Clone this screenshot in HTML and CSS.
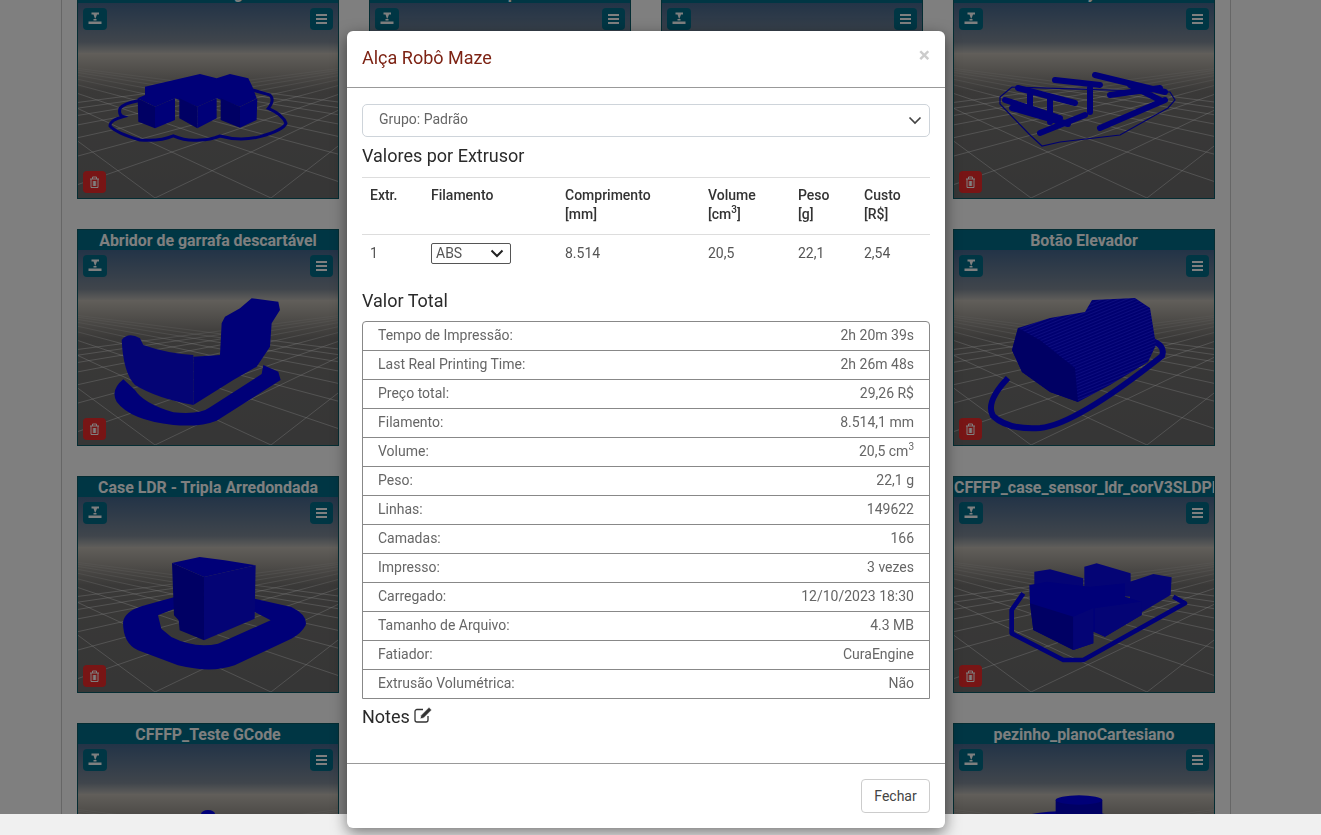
FILE: index.html
```html
<!DOCTYPE html>
<html lang="pt-BR">
<head>
  <meta charset="UTF-8" />
  <title>Impressões</title>
  <link rel="stylesheet" href="styles.css">
</head>
<body>
  <!-- shared drawings -->
  <svg class="sprite" aria-hidden="true">
    <defs>
      <linearGradient id="sky" x1="0" y1="0" x2="0" y2="1">
        <stop offset="0" stop-color="#46688f"/>
        <stop offset=".2" stop-color="#808b98"/>
        <stop offset=".27" stop-color="#cbc5bb"/>
        <stop offset=".45" stop-color="#747270"/>
        <stop offset="1" stop-color="#6c6c6c"/>
      </linearGradient>
      <linearGradient id="fade" x1="0" y1="0" x2="0" y2="1">
        <stop offset="0" stop-color="#c4beb5" stop-opacity="1"/>
        <stop offset=".7" stop-color="#807d79" stop-opacity=".5"/>
        <stop offset="1" stop-color="#747270" stop-opacity="0"/>
      </linearGradient>
      <pattern id="layers" width="4" height="3" patternUnits="userSpaceOnUse" patternTransform="rotate(-22)">
        <rect width="4" height="3" fill="#0000e0"/>
        <rect width="4" height="1" fill="#1a1aff"/>
      </pattern>
      <symbol id="ground" viewBox="0 0 260 195">
        <rect width="260" height="195" fill="url(#sky)"/>
        <path class="grid-line" d="M-120 50L77 195M-120 50L193 195M-120 50L309 195M-120 50L425 195M-120 50L541 195M-120 50L657 195M-120 50L773 195M-120 50L889 195M-120 50L1005 195"/>
        <path class="grid-line" d="M380 50L193 195M380 50L77 195M380 50L-39 195M380 50L-155 195M380 50L-271 195M380 50L-387 195M380 50L-503 195M380 50L-619 195M380 50L-735 195"/>
        <rect y="50" width="260" height="44" fill="url(#fade)"/>
      </symbol>
      <symbol id="i-nozzle" viewBox="0 0 24 22">
        <path d="M8.500 4.500h7.500v2h-2l-1.500 4h-.6L10.500 6.500h-2z"/>
        <rect x="10.500" y="11" width="3" height="1.500"/>
        <rect x="5.500" y="13.500" width="13" height="2.500"/>
      </symbol>
      <symbol id="i-bars" viewBox="0 0 23 22">
        <path d="M6 6h11v2H6zM6 10h11v2H6zM6 14h11v2H6z"/>
      </symbol>
      <symbol id="i-trash" viewBox="0 0 23 22">
        <path class="trash-line" d="M7 8h9M8 8v8.500h7V8M9.500 8V6h4v2M10.300 10v5M11.500 10v5M12.700 10v5"/>
      </symbol>
    </defs>
  </svg>

  <div class="container">
    <div class="grid">

      <div class="card">
        <div class="card-title">Caixa de Engate</div>
        <div class="scene">
          <svg class="scene-art" viewBox="0 0 260 195">
            <use href="#ground"/>
            <g transform="translate(-18,-3) scale(.3333)">
              <path class="thin" d="M235 302Q190 310 180 325Q175 345 190 350Q150 360 150 378Q170 400 240 420Q300 425 340 408Q380 425 420 420Q450 420 480 408Q540 425 600 410Q670 390 678 370Q670 345 625 325Q645 300 630 285L578 270"/>
              <path class="solid" d="M255 260L420 222L470 235L510 222L565 235L578 262L590 295L540 320L470 295L412 320L345 295L285 320L233 295L255 285Z"/>
              <path class="dark" d="M233 295L285 320L285 385L235 365ZM358 295L412 320L412 385L358 355ZM482 295L540 320L540 383L482 360Z"/>
              <path class="solid" d="M285 320L345 295L345 360L285 385ZM412 320L470 295L470 355L412 385ZM540 320L592 295L590 360L540 383Z"/>
            </g>
          </svg>
          <button class="btn-icon btn-nozzle"><svg><use href="#i-nozzle"/></svg></button>
          <button class="btn-icon btn-menu"><svg><use href="#i-bars"/></svg></button>
          <button class="btn-icon btn-trash"><svg><use href="#i-trash"/></svg></button>
        </div>
      </div>

      <div class="card">
        <div class="card-title">Base Superior</div>
        <div class="scene">
          <svg class="scene-art" viewBox="0 0 260 195"><use href="#ground"/></svg>
          <button class="btn-icon btn-nozzle"><svg><use href="#i-nozzle"/></svg></button>
          <button class="btn-icon btn-menu"><svg><use href="#i-bars"/></svg></button>
          <button class="btn-icon btn-trash"><svg><use href="#i-trash"/></svg></button>
        </div>
      </div>

      <div class="card">
        <div class="card-title">Caixa Sensor</div>
        <div class="scene">
          <svg class="scene-art" viewBox="0 0 260 195"><use href="#ground"/></svg>
          <button class="btn-icon btn-nozzle"><svg><use href="#i-nozzle"/></svg></button>
          <button class="btn-icon btn-menu"><svg><use href="#i-bars"/></svg></button>
          <button class="btn-icon btn-trash"><svg><use href="#i-trash"/></svg></button>
        </div>
      </div>

      <div class="card">
        <div class="card-title">Rodas y Eixo</div>
        <div class="scene">
          <svg class="scene-art" viewBox="0 0 260 195">
            <use href="#ground"/>
            <g transform="translate(-954,-3)">
              <path class="hair" d="M1000 97L1012 87L1170 92L1175 100L1168 108L1120 135L1060 142L1042 146L1030 135L1000 104Z"/>
              <path class="rod" d="M1018 88L1075 103M1005 100L1060 118M1012 108L1068 124M1040 133L1085 115M1055 80L1100 85M1095 75L1165 92M1110 95L1160 88M1100 128L1165 100M1130 85L1160 100M1030 92L1030 112M1050 98L1050 122M1090 88L1090 112"/>
            </g>
          </svg>
          <button class="btn-icon btn-nozzle"><svg><use href="#i-nozzle"/></svg></button>
          <button class="btn-icon btn-menu"><svg><use href="#i-bars"/></svg></button>
          <button class="btn-icon btn-trash"><svg><use href="#i-trash"/></svg></button>
        </div>
      </div>

      <div class="card">
        <div class="card-title">Abridor de garrafa descartável</div>
        <div class="scene">
          <svg class="scene-art" viewBox="0 0 260 195">
            <use href="#ground"/>
            <g transform="translate(-18,0) scale(.3333)">
              <path class="solid" d="M610 345L655 365L662 390L470 512Q420 532 340 525Q210 510 170 455Q150 420 190 388L225 420Q250 460 340 487Q420 495 450 472L605 372Z"/>
              <path class="solid" d="M400 320L480 315L485 220L495 200L540 175L575 145L655 155L660 180L635 220L630 290L590 350L520 390L400 465Z"/>
              <path class="fill-layers" d="M185 270Q205 245 240 265L250 285Q320 310 400 315L400 465Q290 445 225 405Q190 370 185 270Z"/>
            </g>
          </svg>
          <button class="btn-icon btn-nozzle"><svg><use href="#i-nozzle"/></svg></button>
          <button class="btn-icon btn-menu"><svg><use href="#i-bars"/></svg></button>
          <button class="btn-icon btn-trash"><svg><use href="#i-trash"/></svg></button>
        </div>
      </div>

      <div class="card">
        <div class="card-title">Suporte</div>
        <div class="scene">
          <svg class="scene-art" viewBox="0 0 260 195"><use href="#ground"/></svg>
        </div>
      </div>

      <div class="card">
        <div class="card-title">Tampa</div>
        <div class="scene">
          <svg class="scene-art" viewBox="0 0 260 195"><use href="#ground"/></svg>
        </div>
      </div>

      <div class="card">
        <div class="card-title">Botão Elevador</div>
        <div class="scene">
          <svg class="scene-art" viewBox="0 0 260 195">
            <use href="#ground"/>
            <g transform="translate(-954,-250)">
              <path class="ring" d="M1008 378Q985 402 993 416Q1008 430 1040 428Q1075 425 1162 356Q1166 345 1150 340"/>
              <path class="fill-layers" d="M1018 328L1050 318L1085 312L1092 300L1135 298L1150 308L1156 345L1148 362L1110 385L1078 402L1050 392L1022 372L1012 350Z"/>
              <path class="dark" d="M1022 372L1050 392L1078 402L1075 368L1040 340L1018 328L1012 350Z"/>
            </g>
          </svg>
          <button class="btn-icon btn-nozzle"><svg><use href="#i-nozzle"/></svg></button>
          <button class="btn-icon btn-menu"><svg><use href="#i-bars"/></svg></button>
          <button class="btn-icon btn-trash"><svg><use href="#i-trash"/></svg></button>
        </div>
      </div>

      <div class="card">
        <div class="card-title">Case LDR - Tripla Arredondada</div>
        <div class="scene">
          <svg class="scene-art" viewBox="0 0 260 195">
            <use href="#ground"/>
            <g transform="scale(.3333)">
              <path class="solid" fill-rule="evenodd" d="M135 375Q140 345 190 328L290 300L530 305L640 330Q690 355 683 385Q670 410 640 425L470 505Q400 530 300 505L180 460Q135 440 135 375ZM240 355L250 395L280 420Q350 455 420 440L578 370L530 345L290 335Z"/>
              <path class="dark" d="M282 198L378 240L378 430L305 400L302 370L288 355Z"/>
              <path class="fill-layers" d="M378 240L533 205L530 365L378 430Z"/>
              <path class="solid" d="M282 198L365 180L440 190L533 205L378 240Z"/>
            </g>
          </svg>
          <button class="btn-icon btn-nozzle"><svg><use href="#i-nozzle"/></svg></button>
          <button class="btn-icon btn-menu"><svg><use href="#i-bars"/></svg></button>
          <button class="btn-icon btn-trash"><svg><use href="#i-trash"/></svg></button>
        </div>
      </div>

      <div class="card">
        <div class="card-title">Suporte</div>
        <div class="scene">
          <svg class="scene-art" viewBox="0 0 260 195"><use href="#ground"/></svg>
        </div>
      </div>

      <div class="card">
        <div class="card-title">Tampa</div>
        <div class="scene">
          <svg class="scene-art" viewBox="0 0 260 195"><use href="#ground"/></svg>
        </div>
      </div>

      <div class="card">
        <div class="card-title">CFFFP_case_sensor_ldr_corV3SLDPRT</div>
        <div class="scene">
          <svg class="scene-art" viewBox="0 0 260 195">
            <use href="#ground"/>
            <g transform="translate(-14,-27) scale(.3333)">
              <path class="ring-thin" d="M250 370L215 420L215 490L370 570L430 570L735 400L700 380"/>
              <path class="fill-layers" d="M283 305L330 298L430 325L430 380L283 360Z"/>
              <path class="fill-layers" d="M433 290L470 280L572 310L572 380L433 370Z"/>
              <path class="fill-layers" d="M570 335L640 312L695 322L692 375L600 430L570 420Z"/>
              <path class="solid" d="M268 345L320 335L450 350L555 340L555 380L605 395L605 435L495 500L460 485L460 520L400 540L280 480L270 400Z"/>
              <path class="dark" d="M270 400L400 440L400 540L280 480Z"/>
              <path class="fill-layers" d="M400 440L460 415L460 520L400 540ZM465 415L605 395L605 435L495 500L465 485Z"/>
            </g>
          </svg>
          <button class="btn-icon btn-nozzle"><svg><use href="#i-nozzle"/></svg></button>
          <button class="btn-icon btn-menu"><svg><use href="#i-bars"/></svg></button>
          <button class="btn-icon btn-trash"><svg><use href="#i-trash"/></svg></button>
        </div>
      </div>

      <div class="card">
        <div class="card-title">CFFFP_Teste GCode</div>
        <div class="scene">
          <svg class="scene-art" viewBox="0 0 260 195">
            <use href="#ground"/>
            <ellipse class="solid" cx="130" cy="70" rx="7" ry="4"/>
          </svg>
          <button class="btn-icon btn-nozzle"><svg><use href="#i-nozzle"/></svg></button>
          <button class="btn-icon btn-menu"><svg><use href="#i-bars"/></svg></button>
        </div>
      </div>

      <div class="card">
        <div class="card-title">Suporte</div>
        <div class="scene"><svg class="scene-art" viewBox="0 0 260 195"><use href="#ground"/></svg></div>
      </div>

      <div class="card">
        <div class="card-title">Tampa</div>
        <div class="scene"><svg class="scene-art" viewBox="0 0 260 195"><use href="#ground"/></svg></div>
      </div>

      <div class="card">
        <div class="card-title">pezinho_planoCartesiano</div>
        <div class="scene">
          <svg class="scene-art" viewBox="0 0 260 195">
            <use href="#ground"/>
            <g transform="translate(-14,-54) scale(.3333)">
              <ellipse class="solid" cx="385" cy="395" rx="155" ry="32"/>
              <path class="dark" d="M347 330L487 330L487 400L347 400Z"/>
              <ellipse class="solid" cx="417" cy="330" rx="70" ry="14"/>
            </g>
          </svg>
          <button class="btn-icon btn-nozzle"><svg><use href="#i-nozzle"/></svg></button>
          <button class="btn-icon btn-menu"><svg><use href="#i-bars"/></svg></button>
        </div>
      </div>

    </div>
  </div>

  <div class="backdrop"></div>
  <div class="page-footer"></div>

  <div class="modal">
    <div class="modal-header">
      <h4 class="modal-title">Alça Robô Maze</h4>
      <button class="modal-close">×</button>
    </div>

    <div class="modal-body">
      <div class="select-wrap">
        <select class="group-select">
          <option>Grupo: Padrão</option>
        </select>
        <svg class="chevron" viewBox="0 0 14 9"><path d="M1.500 1.500L7 7l5.500-5.500"/></svg>
      </div>

      <h5 class="section-title">Valores por Extrusor</h5>
      <table class="extruder-table">
        <colgroup>
          <col class="col-extr"><col class="col-fil"><col class="col-comp"><col class="col-vol"><col class="col-peso"><col class="col-custo">
        </colgroup>
        <thead>
          <tr>
            <th>Extr.</th>
            <th>Filamento</th>
            <th>Comprimento<br>[mm]</th>
            <th>Volume<br>[cm<sup>3</sup>]</th>
            <th>Peso<br>[g]</th>
            <th>Custo<br>[R$]</th>
          </tr>
        </thead>
        <tbody>
          <tr>
            <td>1</td>
            <td>
              <div class="mini-select">
                <select><option>ABS</option></select>
                <svg class="chevron-small" viewBox="0 0 14 9"><path d="M1.500 1.500L7 7l5.500-5.500"/></svg>
              </div>
            </td>
            <td>8.514</td>
            <td>20,5</td>
            <td>22,1</td>
            <td>2,54</td>
          </tr>
        </tbody>
      </table>

      <h5 class="section-title total-title">Valor Total</h5>
      <ul class="total-list">
        <li><span>Tempo de Impressão:</span><span>2h 20m 39s</span></li>
        <li><span>Last Real Printing Time:</span><span>2h 26m 48s</span></li>
        <li><span>Preço total:</span><span>29,26 R$</span></li>
        <li><span>Filamento:</span><span>8.514,1 mm</span></li>
        <li><span>Volume:</span><span>20,5 cm<sup>3</sup></span></li>
        <li><span>Peso:</span><span>22,1 g</span></li>
        <li><span>Linhas:</span><span>149622</span></li>
        <li><span>Camadas:</span><span>166</span></li>
        <li><span>Impresso:</span><span>3 vezes</span></li>
        <li><span>Carregado:</span><span>12/10/2023 18:30</span></li>
        <li><span>Tamanho de Arquivo:</span><span>4.3 MB</span></li>
        <li><span>Fatiador:</span><span>CuraEngine</span></li>
        <li><span>Extrusão Volumétrica:</span><span>Não</span></li>
      </ul>

      <h5 class="section-title notes-title">Notes
        <svg class="edit-icon" viewBox="0 0 18 16">
          <path class="edit-box" d="M9 2.500H3A2 2 0 0 0 1 4.500v8.500a2 2 0 0 0 2 2h9a2 2 0 0 0 2-2V9"/>
          <path class="edit-pen" d="M15 .3l2.700 2.700-8 8-3.700 1 1-3.700z"/>
        </svg>
      </h5>
    </div>

    <div class="modal-footer">
      <button class="btn-close-modal">Fechar</button>
    </div>
  </div>
</body>
</html>
```

FILE: styles.css
```css
html,
body {
  margin: 0;
  height: 100%;
  overflow: hidden;
}

body {
  font-family: Roboto, "Liberation Sans", sans-serif;
  font-size: 14px;
  color: #333;
  background-color: #fff;
}

.sprite {
  position: absolute;
  width: 0;
  height: 0;
}

.container {
  box-sizing: border-box;
  width: 1170px;
  margin-left: 61px;
  padding: 0 15px;
  border-left: 1px solid #ccc;
  border-right: 1px solid #ccc;
  height: 100%;
  overflow: hidden;
}

.grid {
  display: grid;
  grid-template-columns: repeat(4, 262px);
  gap: 30px;
  margin-top: -18px;
}

.card {
  height: 217px;
  box-sizing: border-box;
  border: 1px solid #0a5a66;
  background-color: #006d88;
}

.card-title {
  height: 20px;
  line-height: 21px;
  font-size: 15.9px;
  font-weight: 700;
  color: #fff;
  text-align: center;
  white-space: nowrap;
  overflow: hidden;
}

.scene {
  position: relative;
  height: 195px;
}

.scene-art {
  display: block;
  width: 260px;
  height: 195px;
}

.grid-line {
  fill: none;
  stroke: #fff;
  stroke-width: .7;
  stroke-opacity: .55;
}

.solid { fill: #0000f0; }
.dark { fill: #0000c8; }
.fill-layers { fill: url(#layers); }

.thin {
  fill: none;
  stroke: #0000e0;
  stroke-width: 9;
}

.hair {
  fill: none;
  stroke: #0000e0;
  stroke-width: 1.2;
}

.rod {
  fill: none;
  stroke: #0000f0;
  stroke-width: 6;
  stroke-linecap: round;
}

.ring {
  fill: none;
  stroke: #0000f0;
  stroke-width: 6;
}

.ring-thin {
  fill: none;
  stroke: #0000f0;
  stroke-width: 14;
  stroke-linejoin: round;
}

.btn-icon {
  position: absolute;
  padding: 0;
  border: 0;
  border-radius: 4px;
  height: 22px;
  background-color: #006d88;
}

.btn-icon svg {
  display: block;
  width: 100%;
  height: 100%;
  fill: #fff;
}

.btn-nozzle {
  left: 5px;
  top: 5px;
  width: 24px;
}

.btn-menu {
  right: 5px;
  top: 5px;
  width: 23px;
}

.btn-trash {
  left: 5px;
  bottom: 5px;
  width: 23px;
  background-color: #f02a2a;
}

.trash-line {
  fill: none;
  stroke: #fff;
  stroke-width: 1;
}

.backdrop {
  position: fixed;
  inset: 0;
  background-color: rgba(0, 0, 0, .5);
}

.page-footer {
  position: fixed;
  left: 0;
  right: 0;
  bottom: 0;
  height: 21px;
  background-color: #f0f0f0;
}

.modal {
  position: fixed;
  left: 347px;
  top: 31px;
  width: 598px;
  height: 797px;
  display: flex;
  flex-direction: column;
  box-sizing: border-box;
  background-color: #fff;
  border-radius: 6px;
  box-shadow: 0 5px 15px rgba(0, 0, 0, .5);
}

.modal-header {
  display: flex;
  justify-content: space-between;
  height: 57px;
  box-sizing: border-box;
  padding: 0 15px;
  border-bottom: 1px solid #999;
}

.modal-title {
  margin: 0;
  line-height: 54px;
  font-size: 18px;
  font-weight: 400;
  color: #7d2314;
}

.modal-close {
  height: 48px;
  padding: 0;
  border: 0;
  background: none;
  font-family: inherit;
  font-size: 21px;
  font-weight: 700;
  color: #ccc;
}

.modal-body {
  flex: 1;
  padding: 16px 15px 0;
}

.select-wrap {
  position: relative;
}

.group-select {
  display: block;
  width: 100%;
  height: 33px;
  padding: 0 15px 4px 16px;
  border: 1px solid #ced4da;
  border-radius: 5px;
  appearance: none;
  background: #fff;
  font-family: inherit;
  font-size: 14px;
  color: #666;
}

.chevron {
  position: absolute;
  right: 8px;
  top: 12px;
  width: 14px;
  height: 9px;
  fill: none;
  stroke: #444;
  stroke-width: 1.7;
}

.section-title {
  margin: 8px 0 10px;
  line-height: 22px;
  font-size: 18px;
  font-weight: 400;
  color: #2a2a2a;
}

.extruder-table {
  width: 100%;
  table-layout: fixed;
  border-collapse: collapse;
  font-size: 14px;
}

.col-extr { width: 62px; }
.col-fil { width: 134px; }
.col-comp { width: 143px; }
.col-vol { width: 90px; }
.col-peso { width: 66px; }

.extruder-table th {
  padding: 8px 7px 10px;
  line-height: 19px;
  font-weight: 500;
  text-align: left;
  vertical-align: top;
  border-top: 1px solid #ddd;
  border-bottom: 1px solid #ddd;
}

.extruder-table td {
  padding: 7px 7px 9px;
  line-height: 19px;
  color: #555;
}

.extruder-table th:first-child,
.extruder-table td:first-child {
  padding-left: 8px;
}

.extruder-table sup {
  font-size: 10px;
  line-height: 0;
}

.mini-select {
  position: relative;
  width: 80px;
  margin-top: 1px;
}

.mini-select select {
  display: block;
  width: 100%;
  height: 21px;
  padding: 0 4px 2px;
  border: 1px solid #555;
  border-radius: 2px;
  appearance: none;
  background: #fff;
  font-family: inherit;
  font-size: 14px;
  color: #555;
}

.chevron-small {
  position: absolute;
  right: 7px;
  top: 6px;
  width: 14px;
  height: 9px;
  fill: none;
  stroke: #222;
  stroke-width: 2;
}

.total-title {
  margin: 17px 0 9px;
}

.total-list {
  margin: 0;
  padding: 0;
  list-style: none;
  border: 1px solid #888;
  border-radius: 4px 4px 0 0;
  color: #666;
}

.total-list li {
  display: flex;
  justify-content: space-between;
  height: 28px;
  line-height: 26px;
  padding: 0 15px;
}

.total-list li + li {
  border-top: 1px solid #888;
}

.total-list sup {
  font-size: 10px;
  line-height: 0;
}

.notes-title {
  margin: 7px 0 0;
}

.edit-icon {
  width: 18px;
  height: 16px;
  fill: none;
  stroke: #333;
  stroke-width: 1.3;
}

.edit-pen {
  fill: #333;
  stroke: #fff;
  stroke-width: .7;
}

.modal-footer {
  display: flex;
  justify-content: flex-end;
  height: 65px;
  box-sizing: border-box;
  padding: 15px;
  border-top: 1px solid #999;
}

.btn-close-modal {
  width: 69px;
  height: 34px;
  padding-bottom: 2px;
  border: 1px solid #ccc;
  border-radius: 4px;
  background: #fff;
  font-family: inherit;
  font-size: 14px;
  color: #444;
}
```
